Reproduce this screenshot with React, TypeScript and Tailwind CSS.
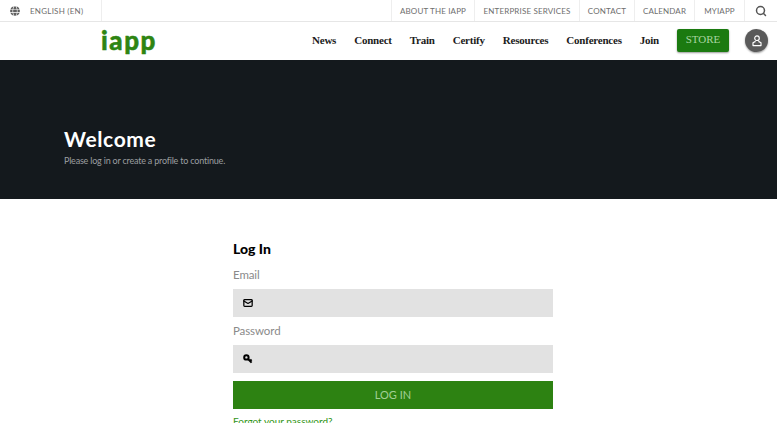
import React from 'react';
import { Search, Mail } from 'lucide-react';
import { FaGlobe } from 'react-icons/fa';

const topLinks = [
  { label: 'ABOUT THE IAPP', width: 'w-[83px]' },
  { label: 'ENTERPRISE SERVICES', width: 'w-[105px]' },
  { label: 'CONTACT', width: 'w-[55px]' },
  { label: 'CALENDAR', width: 'w-[60px]' },
  { label: 'MYIAPP', width: 'w-[50px]' },
];

const navLinks = ['News', 'Connect', 'Train', 'Certify', 'Resources', 'Conferences', 'Join'];

function PersonIcon() {
  return (
    <svg viewBox="0 0 14 14" className="h-[14px] w-[14px]" fill="none" stroke="#ffffff" strokeWidth="1.2">
      <circle cx="7" cy="4.2" r="2.3" />
      <path d="M5.6 7.4 L3 8.8 V11.6 H11 V8.8 L8.4 7.4" strokeLinejoin="round" />
    </svg>
  );
}

function KeyIcon() {
  return (
    <svg viewBox="0 0 10 10" className="h-[10px] w-[10px]">
      <circle cx="3.4" cy="3.4" r="2.2" fill="none" stroke="#000000" strokeWidth="2" />
      <path d="M4.8 4.8 L8.6 8.6 M7 7 L8.6 5.6" stroke="#000000" strokeWidth="2" fill="none" />
    </svg>
  );
}

function TopBar() {
  return (
    <div className="flex h-[22px] items-stretch justify-between border-b border-[#e6e6e6] bg-white font-['Lato',sans-serif] text-[8px] tracking-[0.02em] text-[#6e6e6e]">
      <div className="flex w-[102px] items-center gap-[10px] border-r border-[#eeeeee] pl-[10px]">
        <FaGlobe className="h-[10px] w-[10px] text-[#5f5f5f]" />
        <span className="tracking-[0.03em]">ENGLISH (EN)</span>
      </div>
      <div className="flex items-stretch">
        {topLinks.map((link) => (
          <div key={link.label} className={`flex items-center justify-center border-l border-[#eeeeee] ${link.width}`}>
            {link.label}
          </div>
        ))}
        <div className="flex w-[33px] items-center justify-center border-l border-[#eeeeee]">
          <Search className="h-[12px] w-[12px] text-[#555555]" strokeWidth={3} />
        </div>
      </div>
    </div>
  );
}

function MainNav() {
  return (
    <div className="flex h-[38px] items-center bg-white pl-[101px] pr-[9px]">
      <span className="mt-[-2px] font-['Lato',sans-serif] text-[26px] font-black leading-none tracking-[0.06em] text-[#2e8512] [-webkit-text-stroke:0.5px_#2e8512]">
        iapp
      </span>
      <nav className="ml-auto mt-[-2px] flex items-center gap-[18px] font-['Liberation_Serif',serif] text-[11px] font-bold tracking-[-0.02em] text-[#1c1c1c]">
        {navLinks.map((link) => (
          <span key={link}>{link}</span>
        ))}
      </nav>
      <button className="ml-[18px] mt-[-1px] h-[23px] w-[52px] rounded-[2px] bg-[#1b7a10] pb-[2px] font-['Liberation_Serif',serif] text-[11px] text-[#a9d5a0] shadow-[0_1px_2px_rgba(0,0,0,0.4)]">
        STORE
      </button>
      <div className="ml-[16px] mt-[-1px] flex h-[23px] w-[23px] items-center justify-center rounded-full bg-[#5a5a5a] shadow-[0_1px_2px_rgba(0,0,0,0.4)]">
        <PersonIcon />
      </div>
    </div>
  );
}

function Hero() {
  return (
    <div className="flex h-[139px] flex-col justify-center bg-[#14191d] pl-[64px] pt-[34px] font-['Lato',sans-serif]">
      <h1 className="text-[21px] font-bold leading-[28px] tracking-[0.03em] text-white">Welcome</h1>
      <p className="mt-[1px] text-[9px] leading-[14px] tracking-[-0.2px] text-[#9b9ea0]">Please log in or create a profile to continue.</p>
    </div>
  );
}

function Field({ label, icon }: { label: string; icon: React.ReactNode }) {
  return (
    <div>
      <label className="block text-[11.5px] leading-[16px] tracking-[-0.1px] text-[#8a8a8a]">{label}</label>
      <div className="mt-[6px] flex h-[28px] items-center bg-[#e2e2e2] pl-[10px]">{icon}</div>
    </div>
  );
}

function LoginForm() {
  return (
    <div className="ml-[233px] w-[320px] pt-[41px] font-['Lato',sans-serif]">
      <h2 className="text-[14px] font-black leading-[18px] text-black">Log In</h2>
      <div className="mt-[9px] flex flex-col gap-[6px]">
        <Field label="Email" icon={<Mail className="h-[10px] w-[10px] text-black" strokeWidth={3} />} />
        <Field label="Password" icon={<KeyIcon />} />
      </div>
      <button className="mt-[8px] h-[28px] w-full bg-[#2d8212] text-[11px] text-[#a2cf95]">LOG IN</button>
      <a className="mt-[5px] block text-[10px] leading-[14px] text-[#2f9413]">Forgot your password?</a>
    </div>
  );
}

export default function App() {
  return (
    <div className="h-[423px] w-[777px] overflow-hidden bg-white">
      <TopBar />
      <MainNav />
      <Hero />
      <LoginForm />
    </div>
  );
}
